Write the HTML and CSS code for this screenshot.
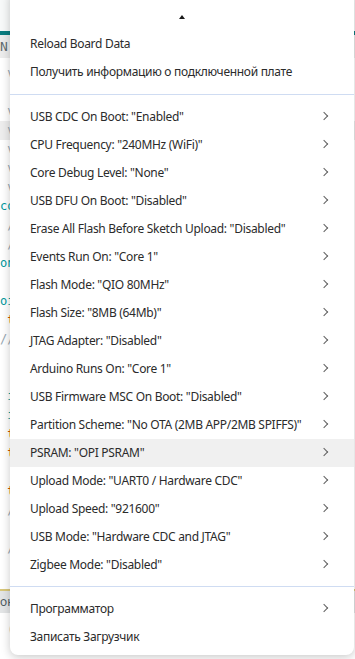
FILE: index.html
```html
<!DOCTYPE html>
<html lang="ru">
<head>
  <meta charset="UTF-8" />
  <title>Arduino IDE – Tools menu</title>
  <link rel="stylesheet" href="styles.css">
</head>
<body>
  <div class="editor">
    <div class="tabs"></div>
    <div class="teal-bar"></div>
    <div class="toolbar">N</div>
    <div class="code">
      <div class="line gray"> v</div>
      <div class="line"></div>
      <div class="line gray"> v</div>
      <div class="line gray current"> v</div>
      <div class="line gray"> v</div>
      <div class="line gray"> v</div>
      <div class="line gray"> v</div>
      <div class="line teal">co</div>
      <div class="line gray"> /</div>
      <div class="line gray"> /</div>
      <div class="line teal">on</div>
      <div class="line"></div>
      <div class="line teal">oi</div>
      <div class="line red"> t</div>
      <div class="line gray">//</div>
      <div class="line"></div>
      <div class="line"></div>
      <div class="line teal"> i</div>
      <div class="line teal"> i</div>
      <div class="line red"> t</div>
      <div class="line red"> t</div>
      <div class="line"></div>
      <div class="line red"> t</div>
      <div class="line gray"> /</div>
      <div class="line"></div>
      <div class="line gray"> /</div>
    </div>
    <div class="output-bar">он</div>
    <div class="output"> (</div>
  </div>

  <div class="menu">
    <div class="scroll-up"><span class="caret"></span></div>

    <div class="item">Reload Board Data</div>
    <div class="item">Получить информацию о подключенной плате</div>
    <div class="separator"></div>

    <div class="item sub">USB CDC On Boot: "Enabled"</div>
    <div class="item sub">CPU Frequency: "240MHz (WiFi)"</div>
    <div class="item sub">Core Debug Level: "None"</div>
    <div class="item sub">USB DFU On Boot: "Disabled"</div>
    <div class="item sub">Erase All Flash Before Sketch Upload: "Disabled"</div>
    <div class="item sub">Events Run On: "Core 1"</div>
    <div class="item sub">Flash Mode: "QIO 80MHz"</div>
    <div class="item sub">Flash Size: "8MB (64Mb)"</div>
    <div class="item sub">JTAG Adapter: "Disabled"</div>
    <div class="item sub">Arduino Runs On: "Core 1"</div>
    <div class="item sub">USB Firmware MSC On Boot: "Disabled"</div>
    <div class="item sub">Partition Scheme: "No OTA (2MB APP/2MB SPIFFS)"</div>
    <div class="item sub active">PSRAM: "OPI PSRAM"</div>
    <div class="item sub">Upload Mode: "UART0 / Hardware CDC"</div>
    <div class="item sub">Upload Speed: "921600"</div>
    <div class="item sub">USB Mode: "Hardware CDC and JTAG"</div>
    <div class="item sub">Zigbee Mode: "Disabled"</div>
    <div class="separator second"></div>

    <div class="item sub">Программатор</div>
    <div class="item">Записать Загрузчик</div>
  </div>
</body>
</html>
```

FILE: styles.css
```css
* {
  box-sizing: border-box;
  margin: 0;
  padding: 0;
}

body {
  width: 355px;
  height: 659px;
  overflow: hidden;
  position: relative;
  background: #ffffff;
  font-family: 'Noto Sans', 'Open Sans', sans-serif;
}

/* editor behind the menu */
.editor {
  display: flex;
  flex-direction: column;
  height: 100%;
}

.tabs {
  height: 31px;
  background: #f7f9f9;
}

.teal-bar {
  height: 4px;
  background: #0b7c7f;
}

.toolbar {
  height: 23px;
  background: #ececec;
  color: #5f6a6e;
  font-family: 'DejaVu Sans Mono', monospace;
  font-size: 13px;
  line-height: 23px;
}

.code {
  flex: 1;
  padding-top: 6px;
  font-family: 'DejaVu Sans Mono', monospace;
  font-size: 12px;
}

.line {
  height: 19px;
  line-height: 19px;
  white-space: pre;
}

.line.current {
  background: #ededed;
}

.gray { color: #95a5b0; }
.teal { color: #00979c; }
.red { color: #d35400; }

.output-bar {
  height: 24px;
  border-top: 2px solid #d9c77a;
  background: #e3e5e6;
  color: #4e5b61;
  font-size: 12px;
  line-height: 22px;
}

.output {
  height: 46px;
  color: #9aa5aa;
  font-family: 'DejaVu Sans Mono', monospace;
  font-size: 12px;
  line-height: 34px;
  white-space: pre;
}

/* context menu overlay */
.menu {
  position: absolute;
  left: 10px;
  top: -10px;
  width: 344px;
  height: 665px;
  background: #ffffff;
  border-radius: 8px;
  box-shadow: 0 2px 10px rgba(0, 0, 0, 0.22);
  padding-top: 10px;
  color: #2b2b2b;
  font-size: 12px;
  letter-spacing: -0.3px;
}

.scroll-up {
  height: 30px;
  display: flex;
  justify-content: center;
  align-items: center;
}

.caret {
  width: 0;
  height: 0;
  border-left: 3px solid transparent;
  border-right: 3px solid transparent;
  border-bottom: 4px solid #1a1a1a;
  margin-top: 3px;
}

.item {
  height: 28px;
  line-height: 28px;
  padding-left: 20px;
  white-space: nowrap;
  position: relative;
}

.item.active {
  background: #f0f0f0;
}

.item.sub::after {
  content: "";
  position: absolute;
  right: 27px;
  top: 10px;
  width: 5px;
  height: 5px;
  border-top: 1.3px solid #606060;
  border-right: 1.3px solid #606060;
  transform: rotate(45deg);
}

.separator {
  height: 1px;
  margin: 8px 0 8px;
  background: #cfdcf2;
}

.separator.second {
  margin: 7px 0 8px;
}
```
